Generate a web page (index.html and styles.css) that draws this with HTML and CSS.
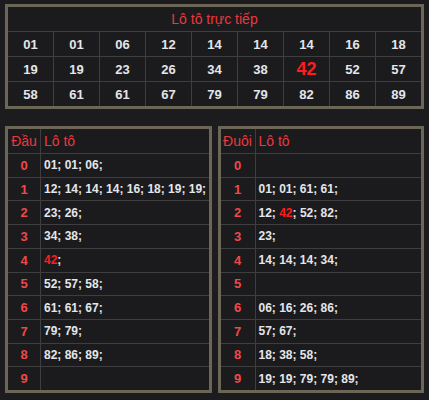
FILE: index.html
```html
<!DOCTYPE html>
<html lang="vi">
<head>
<meta charset="utf-8">
<link rel="stylesheet" href="styles.css">
</head>
<body>
<div class="page">
  <div class="live">
    <div class="live-title">Lô tô trực tiếp</div>
    <div class="n">01</div><div class="n">01</div><div class="n">06</div><div class="n">12</div><div class="n">14</div><div class="n">14</div><div class="n">14</div><div class="n">16</div><div class="n">18</div>
    <div class="n">19</div><div class="n">19</div><div class="n">23</div><div class="n">26</div><div class="n">34</div><div class="n">38</div><div class="n hot">42</div><div class="n">52</div><div class="n">57</div>
    <div class="n">58</div><div class="n">61</div><div class="n">61</div><div class="n">67</div><div class="n">79</div><div class="n">79</div><div class="n">82</div><div class="n">86</div><div class="n">89</div>
  </div>
  <div class="split">
    <div class="lt lt-head">
      <div class="h">Đầu</div><div class="h h2">Lô tô</div>
      <div class="k">0</div><div class="v"><span>01; 01; 06;</span></div>
      <div class="k">1</div><div class="v"><span>12; 14; 14; 14; 16; 18; 19; 19;</span></div>
      <div class="k">2</div><div class="v"><span>23; 26;</span></div>
      <div class="k">3</div><div class="v"><span>34; 38;</span></div>
      <div class="k">4</div><div class="v"><span><span class="r">42</span>;</span></div>
      <div class="k">5</div><div class="v"><span>52; 57; 58;</span></div>
      <div class="k">6</div><div class="v"><span>61; 61; 67;</span></div>
      <div class="k">7</div><div class="v"><span>79; 79;</span></div>
      <div class="k">8</div><div class="v"><span>82; 86; 89;</span></div>
      <div class="k">9</div><div class="v"></div>
    </div>
    <div class="lt lt-tail">
      <div class="h">Đuôi</div><div class="h h2">Lô tô</div>
      <div class="k">0</div><div class="v"></div>
      <div class="k">1</div><div class="v"><span>01; 01; 61; 61;</span></div>
      <div class="k">2</div><div class="v"><span>12; <span class="r">42</span>; 52; 82;</span></div>
      <div class="k">3</div><div class="v"><span>23;</span></div>
      <div class="k">4</div><div class="v"><span>14; 14; 14; 34;</span></div>
      <div class="k">5</div><div class="v"></div>
      <div class="k">6</div><div class="v"><span>06; 16; 26; 86;</span></div>
      <div class="k">7</div><div class="v"><span>57; 67;</span></div>
      <div class="k">8</div><div class="v"><span>18; 38; 58;</span></div>
      <div class="k">9</div><div class="v"><span>19; 19; 79; 79; 89;</span></div>
    </div>
  </div>
</div>
</body>
</html>
```

FILE: styles.css
```css
html, body {
  margin: 0;
  padding: 0;
  background: #1c1c1e;
}
body {
  font-family: "Liberation Sans", Arial, sans-serif;
  width: 429px;
  height: 400px;
  overflow: hidden;
}
.page {
  padding: 4px 5px 0 5px;
}
.live {
  display: grid;
  grid-template-columns: repeat(9, 1fr);
  grid-template-rows: 24px 24px 24px 24px;
  gap: 1px;
  background: #3e3e3e;
  border: 3px solid #6b6655;
}
.live > div {
  background: #1b1b1d;
  display: flex;
  align-items: center;
  justify-content: center;
}
.live-title {
  grid-column: 1 / -1;
  color: #e8393d;
  font-size: 14px;
}
.n {
  color: #e4e6ea;
  font-weight: bold;
  font-size: 13px;
}
.n.hot {
  color: #ff1c1c;
  font-size: 18px;
}
.split {
  display: flex;
  gap: 6px;
  margin-top: 17px;
}
.lt {
  flex: 1;
  display: grid;
  grid-template-rows: 24px repeat(10, 1fr);
  height: 267px;
  box-sizing: border-box;
  gap: 1px;
  background: #3e3e3e;
  border: 3px solid #6b6655;
}
.lt-head { grid-template-columns: 32px 1fr; }
.lt-tail { grid-template-columns: 34px 1fr; }
.lt > div {
  background: #1b1b1d;
  display: flex;
  align-items: center;
  white-space: nowrap;
}
.h {
  color: #e8393d;
  font-size: 14px;
  justify-content: center;
}
.h2 {
  justify-content: flex-start;
  padding-left: 3px;
}
.k {
  justify-content: center;
  color: #f04848;
  font-weight: bold;
  font-size: 13px;
}
.v {
  padding-left: 3px;
  color: #e4e6ea;
  font-weight: bold;
  font-size: 12px;
}
.r {
  color: #ff1c1c;
}
```
